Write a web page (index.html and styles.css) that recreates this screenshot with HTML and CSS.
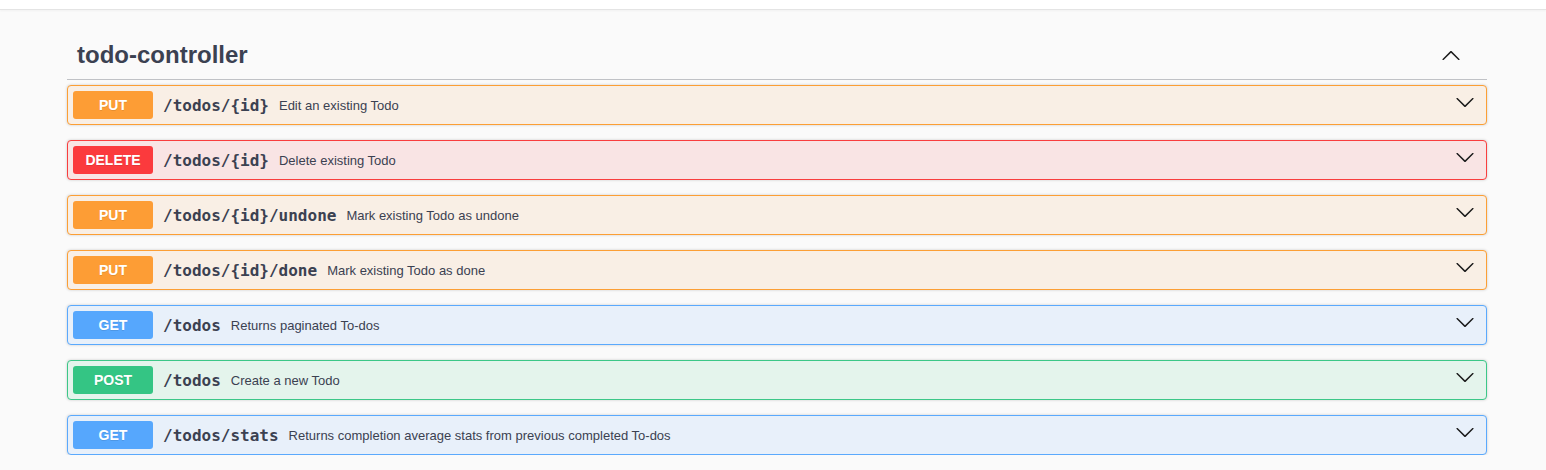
FILE: index.html
```html
<!DOCTYPE html>
<html>
<head>
<meta charset="utf-8">
<link rel="stylesheet" href="styles.css">
</head>
<body>
<div class="topbar"></div>
<div class="wrapper">
  <section class="tag-section">
    <h3 class="opblock-tag">
      <span class="tag-name">todo-controller</span>
      <span class="tag-arrow">
        <svg width="20" height="20" viewBox="0 0 20 20"><path d="M17.418 14.908c.272.268.709.268.979 0s.271-.701 0-.969l-7.908-7.83c-.27-.268-.707-.268-.979 0l-7.908 7.830c-.27.268-.27.701 0 .969.271.268.709.268.979 0L10 7.767l7.418 7.141z"/></svg>
      </span>
    </h3>
    <div class="ops">
      <div class="opblock put">
        <span class="method">PUT</span>
        <span class="path">/todos/{id}</span>
        <span class="desc">Edit an existing Todo</span>
        <span class="arrow"><svg width="20" height="20" viewBox="0 0 20 20"><path d="M17.418 6.109c.272-.268.709-.268.979 0s.271.701 0 .969l-7.908 7.83c-.27.268-.707.268-.979 0l-7.908-7.83c-.27-.268-.27-.701 0-.969.271-.268.709-.268.979 0L10 13.25l7.418-7.141z"/></svg></span>
      </div>
      <div class="opblock delete">
        <span class="method">DELETE</span>
        <span class="path">/todos/{id}</span>
        <span class="desc">Delete existing Todo</span>
        <span class="arrow"><svg width="20" height="20" viewBox="0 0 20 20"><path d="M17.418 6.109c.272-.268.709-.268.979 0s.271.701 0 .969l-7.908 7.83c-.27.268-.707.268-.979 0l-7.908-7.830c-.27-.268-.27-.701 0-.969.271-.268.709-.268.979 0L10 13.25l7.418-7.141z"/></svg></span>
      </div>
      <div class="opblock put">
        <span class="method">PUT</span>
        <span class="path">/todos/{id}/undone</span>
        <span class="desc">Mark existing Todo as undone</span>
        <span class="arrow"><svg width="20" height="20" viewBox="0 0 20 20"><path d="M17.418 6.109c.272-.268.709-.268.979 0s.271.701 0 .969l-7.908 7.83c-.27.268-.707.268-.979 0l-7.908-7.83c-.27-.268-.27-.701 0-.969.271-.268.709-.268.979 0L10 13.25l7.418-7.141z"/></svg></span>
      </div>
      <div class="opblock put">
        <span class="method">PUT</span>
        <span class="path">/todos/{id}/done</span>
        <span class="desc">Mark existing Todo as done</span>
        <span class="arrow"><svg width="20" height="20" viewBox="0 0 20 20"><path d="M17.418 6.109c.272-.268.709-.268.979 0s.271.701 0 .969l-7.908 7.83c-.27.268-.707.268-.979 0l-7.908-7.83c-.27-.268-.27-.701 0-.969.271-.268.709-.268.979 0L10 13.25l7.418-7.141z"/></svg></span>
      </div>
      <div class="opblock get">
        <span class="method">GET</span>
        <span class="path">/todos</span>
        <span class="desc">Returns paginated To-dos</span>
        <span class="arrow"><svg width="20" height="20" viewBox="0 0 20 20"><path d="M17.418 6.109c.272-.268.709-.268.979 0s.271.701 0 .969l-7.908 7.83c-.27.268-.707.268-.979 0l-7.908-7.83c-.27-.268-.27-.701 0-.969.271-.268.709-.268.979 0L10 13.25l7.418-7.141z"/></svg></span>
      </div>
      <div class="opblock post">
        <span class="method">POST</span>
        <span class="path">/todos</span>
        <span class="desc">Create a new Todo</span>
        <span class="arrow"><svg width="20" height="20" viewBox="0 0 20 20"><path d="M17.418 6.109c.272-.268.709-.268.979 0s.271.701 0 .969l-7.908 7.83c-.27.268-.707.268-.979 0l-7.908-7.83c-.27-.268-.27-.701 0-.969.271-.268.709-.268.979 0L10 13.25l7.418-7.141z"/></svg></span>
      </div>
      <div class="opblock get">
        <span class="method">GET</span>
        <span class="path">/todos/stats</span>
        <span class="desc">Returns completion average stats from previous completed To-dos</span>
        <span class="arrow"><svg width="20" height="20" viewBox="0 0 20 20"><path d="M17.418 6.109c.272-.268.709-.268.979 0s.271.701 0 .969l-7.908 7.83c-.27.268-.707.268-.979 0l-7.908-7.83c-.27-.268-.27-.701 0-.969.271-.268.709-.268.979 0L10 13.25l7.418-7.141z"/></svg></span>
      </div>
    </div>
  </section>
</div>
</body>
</html>
```

FILE: styles.css
```css
html, body {
  margin: 0;
  padding: 0;
  background: #fafafa;
  font-family: "Liberation Sans", Arial, sans-serif;
  color: #3b4151;
}

.topbar {
  height: 9px;
  background: #ffffff;
  border-bottom: 1px solid #e4e4e4;
  box-shadow: 0 1px 2px rgba(0, 0, 0, 0.04);
}

.wrapper {
  padding: 20px 59px 0 67px;
}

.tag-section {
  width: 1420px;
}

.opblock-tag {
  display: flex;
  align-items: center;
  margin: 0 0 5px;
  padding: 10px 20px 10px 10px;
  height: 29px;
  border-bottom: 1px solid rgba(59, 65, 81, 0.3);
  font-size: 24px;
  font-weight: 700;
  color: #3b4151;
}

.tag-name {
  flex: 1;
}

.tag-arrow {
  display: flex;
  padding: 0 6px 0 0;
}

.tag-arrow svg, .arrow svg {
  display: block;
  fill: #1a1a1a;
}

.ops {
  display: flex;
  flex-direction: column;
  gap: 15px;
}

.opblock {
  display: flex;
  align-items: center;
  padding: 5px;
  border: 1px solid;
  border-radius: 4px;
  box-shadow: 0 0 3px rgba(0, 0, 0, 0.19);
}

.method {
  min-width: 80px;
  padding: 6px 0;
  border-radius: 3px;
  color: #fff;
  font-size: 14px;
  font-weight: 700;
  line-height: 16px;
  text-align: center;
  text-shadow: 0 1px 0 rgba(0, 0, 0, 0.1);
}

.path {
  padding: 0 10px;
  font-family: "DejaVu Sans Mono", monospace;
  font-size: 16px;
  font-weight: 700;
  color: #3b4151;
}

.desc {
  flex: 1;
  font-size: 13px;
  color: #3b4151;
}

.arrow {
  display: flex;
  padding: 0 6px 7px 10px;
}

.put { background: #f9efe5; border-color: #fc9f35; }
.put .method { background: #fd9d35; }

.delete { background: #f9e4e4; border-color: #f93e3e; }
.delete .method { background: #fb3a3d; }

.get { background: #e8f0fa; border-color: #5aa9fd; }
.get .method { background: #56a7fd; }

.post { background: #e4f4ec; border-color: #3cc788; }
.post .method { background: #34c584; }
```
